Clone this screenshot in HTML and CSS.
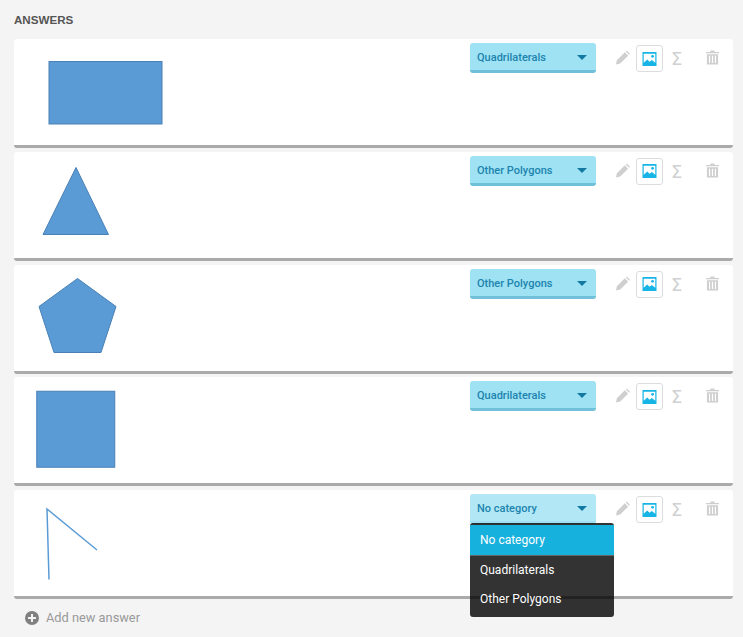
FILE: index.html
```html
<!DOCTYPE html>
<html lang="en">
<head>
<meta charset="utf-8">
<title>Answers</title>
<link rel="stylesheet" href="styles.css">
</head>
<body>
<svg class="sprite" width="0" height="0" aria-hidden="true">
  <symbol id="i-pencil" viewBox="0 0 16 16"><path d="M1 15l1-4.500 8.500-8.500 3.500 3.500-8.500 8.500zM11.500 1l1-1 3.500 3.500-1 1z" transform="translate(0 .5)"/></symbol>
  <symbol id="i-image" viewBox="0 0 15 15"><path fill-rule="evenodd" d="M0 0h15v15H0zM1.300 1.800v9.600l3.700-3.400 2.600 2.400 2.400-1.800 3.700 2.800V1.800z"/><circle cx="10.800" cy="4.600" r="1.500"/></symbol>
  <symbol id="i-trash" viewBox="0 0 14 15"><path d="M5 0h4l.5 1.500H14V3H0V1.500h4.500zM1 4h12v11H1zM3.200 5.500v8h1.300v-8zm3.150 0v8h1.300v-8zm3.150 0v8h1.300v-8z" fill-rule="evenodd"/></symbol>
</svg>
<main class="page">
  <h2 class="heading">ANSWERS</h2>
  <ul class="answers">
    <li class="card">
      <svg class="shape" width="200" height="106"><rect class="fill" x="35" y="22.500" width="113" height="62.500"/></svg>
      <div class="controls">
        <div class="select"><span>Quadrilaterals</span><i class="caret"></i></div>
        <div class="tools">
          <svg class="tool pencil"><use href="#i-pencil"/></svg>
          <span class="image-btn"><svg class="image-icon"><use href="#i-image"/></svg></span>
          <span class="sigma">Σ</span>
          <svg class="tool trash"><use href="#i-trash"/></svg>
        </div>
      </div>
    </li>
    <li class="card">
      <svg class="shape" width="200" height="106"><polygon class="fill" points="62,15.500 29,82.500 94.500,82.500"/></svg>
      <div class="controls">
        <div class="select"><span>Other Polygons</span><i class="caret"></i></div>
        <div class="tools">
          <svg class="tool pencil"><use href="#i-pencil"/></svg>
          <span class="image-btn"><svg class="image-icon"><use href="#i-image"/></svg></span>
          <span class="sigma">Σ</span>
          <svg class="tool trash"><use href="#i-trash"/></svg>
        </div>
      </div>
    </li>
    <li class="card">
      <svg class="shape" width="200" height="106"><polygon class="fill" points="63.500,13.500 102,41.500 87,87.500 40,87.500 25,41.500"/></svg>
      <div class="controls">
        <div class="select"><span>Other Polygons</span><i class="caret"></i></div>
        <div class="tools">
          <svg class="tool pencil"><use href="#i-pencil"/></svg>
          <span class="image-btn"><svg class="image-icon"><use href="#i-image"/></svg></span>
          <span class="sigma">Σ</span>
          <svg class="tool trash"><use href="#i-trash"/></svg>
        </div>
      </div>
    </li>
    <li class="card">
      <svg class="shape" width="200" height="106"><rect class="fill" x="22.750" y="14.250" width="78" height="76"/></svg>
      <div class="controls">
        <div class="select"><span>Quadrilaterals</span><i class="caret"></i></div>
        <div class="tools">
          <svg class="tool pencil"><use href="#i-pencil"/></svg>
          <span class="image-btn"><svg class="image-icon"><use href="#i-image"/></svg></span>
          <span class="sigma">Σ</span>
          <svg class="tool trash"><use href="#i-trash"/></svg>
        </div>
      </div>
    </li>
    <li class="card">
      <svg class="shape" width="200" height="106"><polyline class="line" points="35,89.500 33,19 83,60"/></svg>
      <div class="controls">
        <div class="select select-empty"><span>No category</span><i class="caret"></i>
          <ul class="menu">
            <li class="menu-item active">No category</li>
            <li class="menu-item">Quadrilaterals</li>
            <li class="menu-item">Other Polygons</li>
          </ul>
        </div>
        <div class="tools">
          <svg class="tool pencil"><use href="#i-pencil"/></svg>
          <span class="image-btn"><svg class="image-icon"><use href="#i-image"/></svg></span>
          <span class="sigma">Σ</span>
          <svg class="tool trash"><use href="#i-trash"/></svg>
        </div>
      </div>
    </li>
  </ul>
  <div class="add">
    <svg class="add-icon" width="14" height="14" viewBox="0 0 14 14"><path fill-rule="evenodd" d="M7 0a7 7 0 1 1 0 14A7 7 0 0 1 7 0zM6 3v3H3v2h3v3h2V8h3V6H8V3z"/></svg>
    <span>Add new answer</span>
  </div>
</main>
</body>
</html>
```
FILE: styles.css
```css
* { box-sizing: border-box; }
html, body { margin: 0; padding: 0; }
body {
  width: 743px;
  height: 637px;
  overflow: hidden;
  background: #f4f4f4;
  font-family: Roboto, "Liberation Sans", sans-serif;
}
.sprite { position: absolute; }
.page { padding: 13px 10px 0 14px; }
.heading {
  margin: 0 0 13px;
  font: bold 11.600px/13px "Liberation Sans", sans-serif;
  color: #555;
}
.answers, .menu { list-style: none; margin: 0; padding: 0; }
.answers { display: flex; flex-direction: column; gap: 3.75px; }
.card {
  display: flex;
  justify-content: space-between;
  height: 109px;
  background: #fff;
  border-bottom: 3px solid #aaa;
  border-radius: 3px;
}
.shape { display: block; }
.fill { fill: #5b9bd5; stroke: #4a80b5; stroke-width: 1; }
.line { fill: none; stroke: #5b9bd5; stroke-width: 1.500; }
.controls { display: flex; align-items: flex-start; padding-top: 4px; }
.select {
  position: relative;
  display: flex;
  align-items: center;
  justify-content: space-between;
  width: 126px;
  height: 30px;
  padding: 2px 9px 0 7px;
  background: #9ee2f3;
  border-bottom: 3px solid #6fc0d8;
  border-radius: 3px;
  font-size: 11px;
  font-weight: 500;
  color: #1d84ae;
}
.select-empty {
  background: #b2e8f5;
  border-bottom-color: #9ee2f3;
}
.caret {
  width: 0;
  height: 0;
  border: 5px solid transparent;
  border-top: 5px solid #1279a3;
  border-bottom: 0;
}
.menu {
  position: absolute;
  z-index: 2;
  top: 29px;
  left: 0;
  width: 144px;
  height: 94px;
  padding-top: 2px;
  background: rgba(0, 0, 0, .8);
  border-radius: 3px;
  overflow: hidden;
  font-size: 12px;
  font-weight: 400;
  color: #fff;
}
.menu-item { height: 29px; padding-left: 10px; line-height: 28px; }
.menu-item.active { height: 31px; line-height: 30px; background: #17b1dd; border-bottom: 1px solid #666; }
.tools {
  display: flex;
  align-items: center;
  width: 137px;
  height: 27px;
  margin-top: 2px;
  padding-left: 19px;
}
.tool { display: block; fill: #cfcfcf; margin-bottom: 2px; }
.pencil { width: 15px; height: 15px; }
.image-btn {
  display: flex;
  align-items: center;
  justify-content: center;
  width: 27px;
  height: 27px;
  margin-left: 6px;
  background: #fff;
  border: 1px solid #ddd;
  border-radius: 3px;
}
.image-icon { width: 15px; height: 14px; fill: #17b5e6; }
.sigma { width: 12px; margin-left: 8px; font-family: "DejaVu Sans", sans-serif; font-size: 18px; line-height: 15px; color: #d0d0d0; }
.trash { width: 13px; height: 15px; margin-left: 23px; }
.add {
  display: flex;
  align-items: center;
  gap: 7px;
  margin-top: 10px;
  padding-left: 11px;
  font-size: 12.800px;
  line-height: 17px;
  color: #999;
}
.add-icon { fill: #808080; }
```
